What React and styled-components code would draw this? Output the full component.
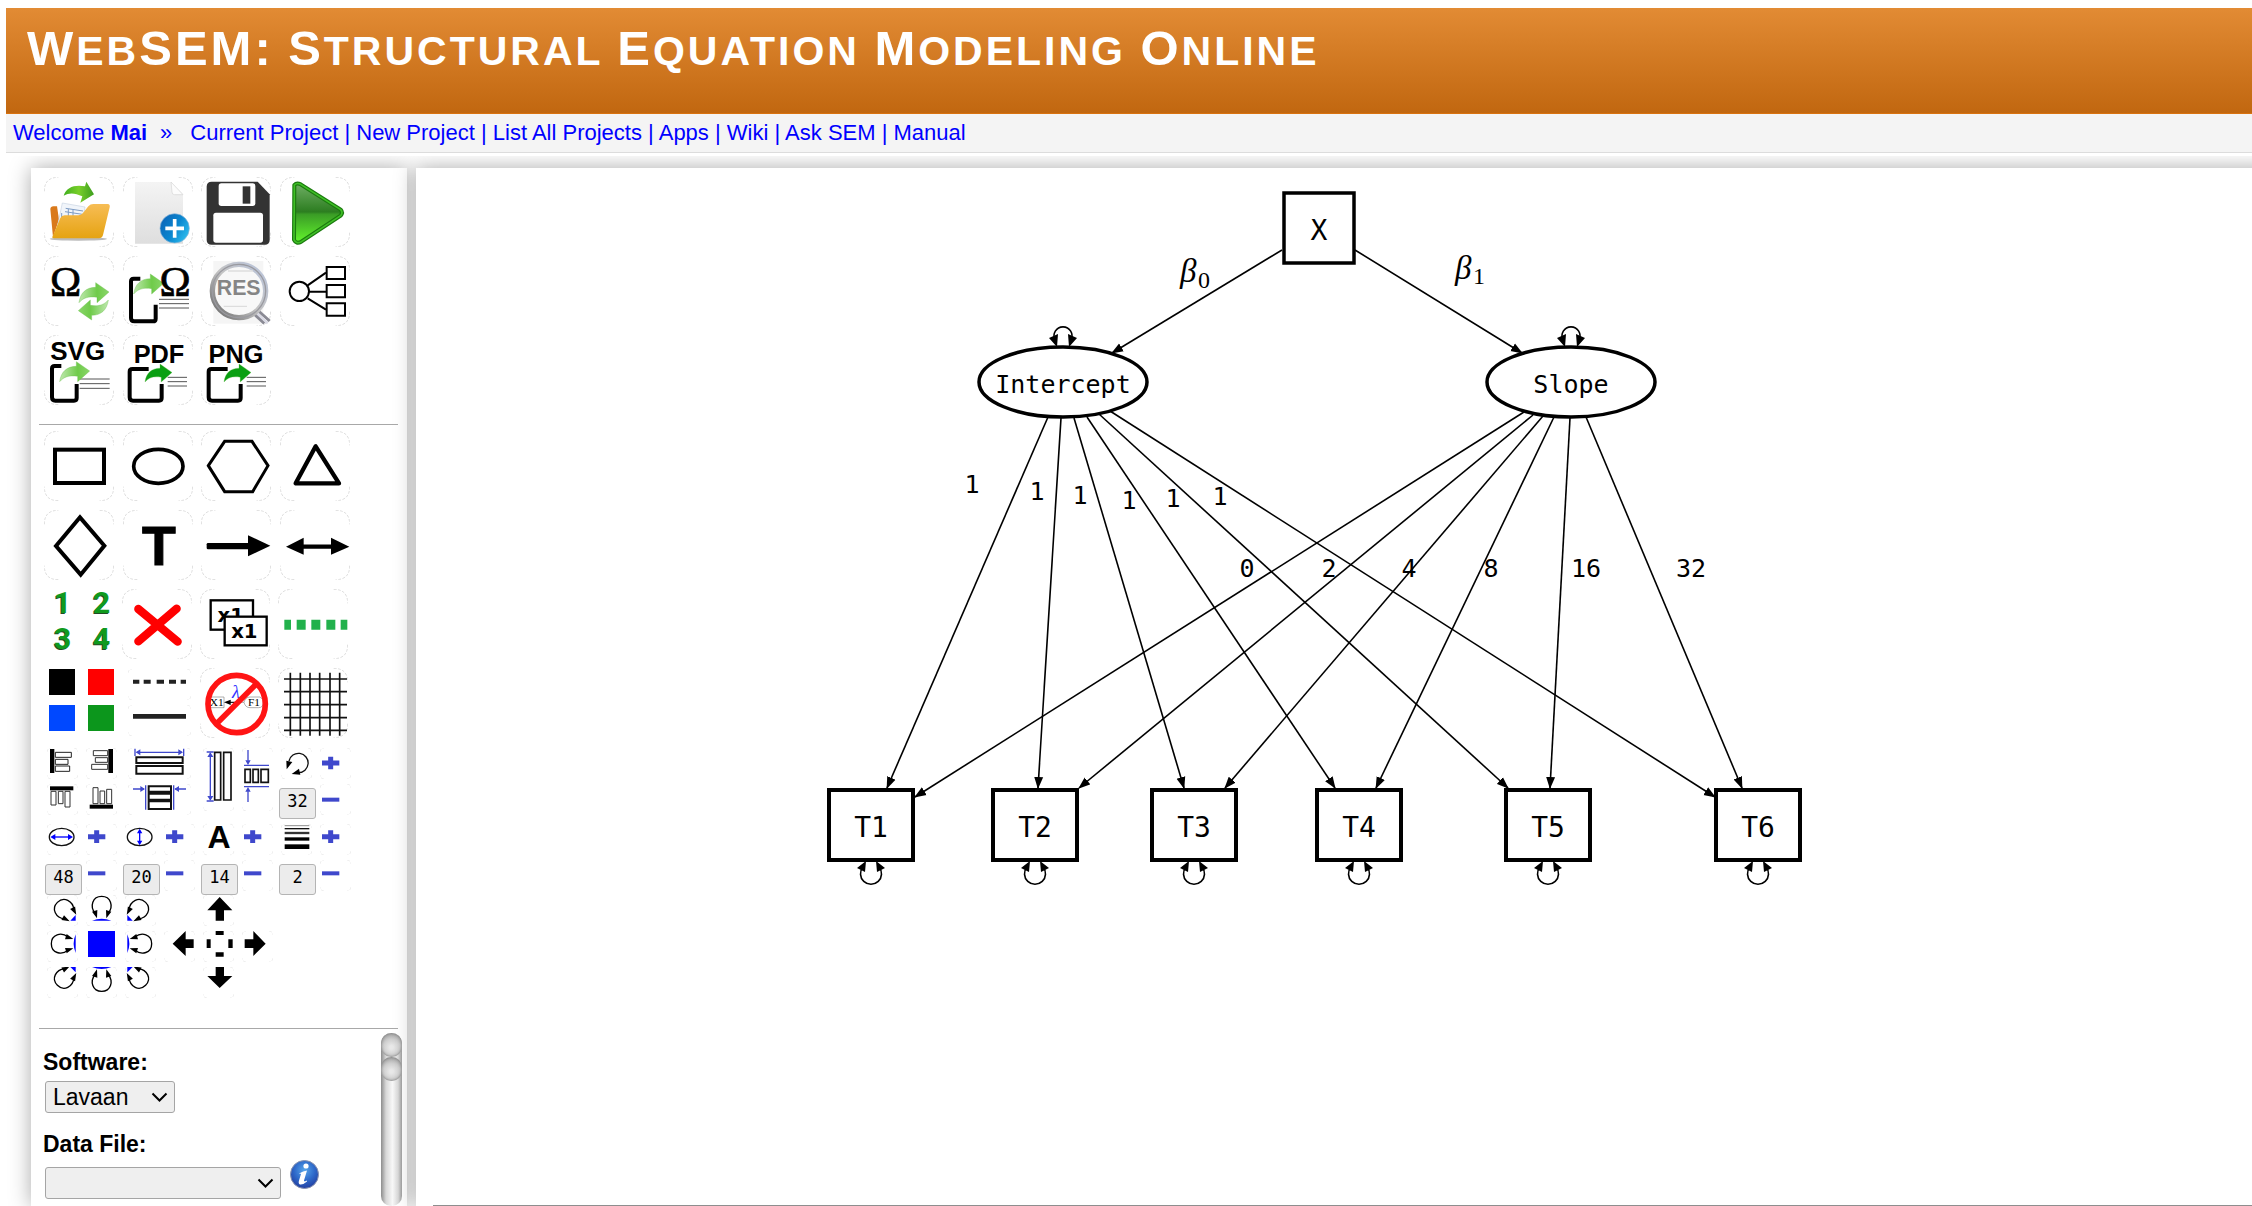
import React from "react";
import styled, { createGlobalStyle, css } from "styled-components";

const GlobalStyle = createGlobalStyle`
  *, *::before, *::after { box-sizing: border-box; }
  html, body, #root { height: 100%; }
  body {
    margin: 0;
    background: #fff;
    color: #000;
    font-family: "Liberation Sans", Arial, sans-serif;
    overflow: hidden;
  }
`;

/* ---------- page frame ---------- */

const Page = styled.div`
  display: flex;
  flex-direction: column;
  height: 100vh;
  padding: 8px 0 0 6px;
`;

const Header = styled.header`
  flex: none;
  height: 106px;
  padding: 12px 21px;
  background: linear-gradient(#e28b34, #c16710);
  border-bottom: 1px solid #d9720f;
`;

const Title = styled.h1`
  margin: 0;
  color: #fff;
  font-size: 41px;
  line-height: 56px;
  letter-spacing: 3px;
  text-transform: uppercase;
  white-space: nowrap;
`;

const Cap = styled.span`
  font-size: 49px;
`;

const Nav = styled.nav`
  flex: none;
  height: 39px;
  padding: 0 7px;
  background: #f4f4f4;
  border-bottom: 1px solid #dcdcdc;
  color: #00f;
  font-size: 22px;
  line-height: 38px;
  white-space: nowrap;
`;

const NavLink = styled.a`
  color: inherit;
  text-decoration: none;
`;

const Chevron = styled.span`
  margin: 0 18px 0 13px;
`;

const Workspace = styled.main`
  flex: 1;
  min-height: 0;
  display: flex;
  gap: 9px;
  margin: 3px 0 0 -6px;
  padding: 12px 0 0 31px;
  overflow: hidden;
`;

const panel = css`
  background: #fff;
  box-shadow: 0 0 20px #aaa;
`;

const Sidebar = styled.aside`
  ${panel}
  flex: none;
  width: 376px;
  padding-top: 9px;
  display: flex;
  flex-direction: column;
`;

/* Runs past the window's right edge, so its shadow stays even along the top. */
const Canvas = styled.section`
  ${panel}
  flex: 1;
  min-width: 0;
  margin-right: -24px;
  display: flex;
  flex-direction: column;
`;

const CanvasEdge = styled.div`
  flex: none;
  height: 1px;
  margin-left: 17px;
  background: #8e8e8e;
`;

/* ---------- tool palette ---------- */

const LargeGrid = styled.div`
  display: grid;
  grid-template-columns: 79px 78px 79px 70px;
  grid-auto-rows: 79px;
  padding-left: 13px;
`;

const SmallGrid = styled.div`
  display: grid;
  grid-template-columns: repeat(8, 39px);
  grid-template-rows: 36px 43px 36px 43px 36px 40px 36px 35px 36px 36px 36px;
  padding-left: 13px;
`;

const Divider = styled.hr`
  width: 359px;
  margin: ${(p) => p.$top}px 0 ${(p) => p.$bottom}px 8px;
  border: 0;
  border-top: 1px solid #a8a8a8;
`;

const place = css`
  justify-self: start;
  ${(p) => p.$at && `grid-column: ${p.$at[0]} / span ${p.$at[2] || 1}; grid-row: ${p.$at[1]} / span ${p.$at[3] || 1};`}
`;

const ToolButton = styled.button`
  ${place}
  display: block;
  width: ${(p) => p.$w}px;
  height: ${(p) => p.$h}px;
  margin: ${(p) => (p.$w === 70 ? "0" : p.$w === 63 ? "1px 0 0 6px" : "1px 0 0 3px")};
  padding: 0;
  border: 0;
  background: none;
  cursor: pointer;
  svg { display: block; overflow: ${(p) => (p.$spill ? "visible" : "hidden")}; }
`;

const DigitButton = styled.button`
  ${place}
  width: 31px;
  height: 31px;
  margin-left: 3px;
  padding: 0 0 3px;
  border: 0;
  background: none;
  color: #109a1e;
  font: 700 30px/26px Roboto, sans-serif;
  text-shadow: -1px 1px 0 #234a25;
  cursor: pointer;
`;

const SwatchButton = styled.button`
  ${place}
  width: ${(p) => p.$w || 26}px;
  height: 26px;
  margin: 1px 0 0 5px;
  padding: 0;
  border: 0;
  background: ${(p) => p.$color};
  cursor: pointer;
`;

const ValueInput = styled.input`
  ${place}
  width: 37px;
  height: 31px;
  margin: 5px 0 0 1px;
  padding: 0 0 6px;
  border: 1px solid #b4b4b4;
  border-radius: 3px;
  background: #ececec;
  text-align: center;
  font: 17px/24px "DejaVu Sans Mono", monospace;
`;

/* ---------- settings form ---------- */

const Settings = styled.div`
  flex: 1;
  min-height: 0;
  display: flex;
  overflow: hidden;
  padding-right: 5px;
`;

const Fields = styled.form`
  flex: 1;
  display: flex;
  flex-direction: column;
  gap: 18px;
  padding: 20px 0 0 12px;
`;

const Field = styled.div`
  display: flex;
  flex-direction: column;
`;

const Label = styled.label`
  font-size: 23px;
  font-weight: 700;
  line-height: 26px;
`;

const ControlRow = styled.div`
  display: flex;
  align-items: flex-end;
  gap: 9px;
  height: ${(p) => p.$h}px;
  padding-left: 2px;
`;

const SelectBox = styled.div`
  position: relative;
  width: ${(p) => p.$w}px;
  height: 32px;
  svg { position: absolute; right: 7px; top: 11px; pointer-events: none; }
`;

const Select = styled.select`
  appearance: none;
  width: 100%;
  height: 100%;
  padding: 0 7px;
  border: 1px solid #a5a5a5;
  border-radius: 3px;
  background: #efefef;
  color: #000;
  font: 23px/28px "Liberation Sans", Arial, sans-serif;
`;

const InfoButton = styled.button`
  align-self: flex-start;
  width: 29px;
  height: 29px;
  margin-top: 3px;
  padding: 0;
  border: 0;
  background: none;
  svg { display: block; }
`;

const ScrollTrack = styled.div`
  flex: none;
  width: 21px;
  margin-top: 4px;
  border-radius: 10px;
  background: linear-gradient(90deg, #8d8d8d, #d8d8d8 24%, #f8f8f8 55%, #d8d8d8 82%, #9a9a9a);
`;

const ScrollKnob = styled.div`
  height: 24px;
  border-radius: 12px;
  background: radial-gradient(circle at 50% 60%, #e8e8e8 10%, #cfcfcf 45%, #8a8a8a 100%);
  box-shadow: inset 0 0 3px #777;
`;

/* ---------- icon drawing ---------- */

function Corners({ x, y, w, h, r, color }) {
  const a = x + 1, b = y + 1, c = x + w - 1, d = y + h - 1;
  return (
    <path
      fill="none" stroke={color} strokeWidth="3" strokeDasharray="8 5"
      d={`M${a} ${b + r}Q${a} ${b} ${a + r} ${b}M${c - r} ${b}Q${c} ${b} ${c} ${b + r}M${c} ${d - r}Q${c} ${d} ${c - r} ${d}M${a + r} ${d}Q${a} ${d} ${a} ${d - r}`}
    />
  );
}

/* The drawings use three units to the pixel; o is the drawing's own origin. */
function Tool({ label, o, at, w = 70, h = 70, spill, children }) {
  const small = w < 70;
  return (
    <ToolButton type="button" aria-label={label} $at={at} $w={w} $h={h} $spill={spill}>
      <svg width={w} height={h} viewBox={`${o[0]} ${o[1]} ${w * 3} ${h * 3}`} aria-hidden="true">
        <Corners x={o[0]} y={o[1]} w={w * 3} h={h * 3} r={small ? 10 : 42} color={small ? "#ececec" : "#dcdcdc"} />
        {children}
      </svg>
    </ToolButton>
  );
}

const Mini = (p) => <Tool w={31} h={31} {...p} />;

const sans = "'Liberation Sans', Arial, sans-serif";
const serif = "'Liberation Serif', 'Times New Roman', serif";
const mono = "'DejaVu Sans Mono', monospace";

const Swoosh = ({ x, y, fill = "url(#leaf)", k = 1 }) => (
  <path transform={`translate(${x} ${y}) scale(${k})`} fill={fill} stroke="#5fb83f" strokeWidth="1"
    d="M0 60C4 30 22 14 50 14V0L90 28 54 60V44C28 40 12 46 0 60Z" />
);

const Export = ({ x, y, w = 86, h = 112 }) => (
  <path d={`M${x + 28} ${y}H${x + 8}Q${x} ${y} ${x} ${y + 8}V${y + h - 10}Q${x} ${y + h} ${x + 10} ${y + h}H${x + w - 14}Q${x + w - 6} ${y + h} ${x + w - 6} ${y + h - 8}V${y + h - 50}`}
    fill="none" stroke="#000" strokeWidth="12" />
);

const Lines = ({ x, y, w, gap = 14 }) => (
  <path d={`M${x} ${y}h${w}M${x} ${y + gap}h${w}M${x} ${y + 2 * gap}h${w}`} stroke="#555" strokeWidth="3" />
);

const Plus = ({ x, y }) => <path d={`M${x} ${y}h52M${x + 26} ${y - 19}v38`} stroke="#3f48cc" strokeWidth="15" fill="none" />;
const Minus = ({ x, y }) => <path d={`M${x} ${y}h52`} stroke="#3f48cc" strokeWidth="12" />;

/* A self loop, open at the bottom, turned to the given angle about its centre. */
const Loop = ({ x, y, turn = 0 }) => (
  <g transform={`translate(${x} ${y}) rotate(${turn})`}>
    <path d="M-20 22C-36 2-28-28 0-28S36 2 20 22" fill="none" stroke="#000" strokeWidth="4" />
    <path d="M-14 38L-29 18-13 13ZM14 38L29 18 13 13Z" />
  </g>
);

function Defs() {
  return (
    <svg width="0" height="0" style={{ position: "absolute" }} aria-hidden="true">
      <defs>
        <linearGradient id="leaf" x1="0" x2="1"><stop offset="0" stopColor="#bfe8ae" /><stop offset=".6" stopColor="#6fcb4a" /><stop offset="1" stopColor="#8ad66a" /></linearGradient>
        <linearGradient id="grass" x1="0" x2="1"><stop offset="0" stopColor="#3fae1e" /><stop offset=".5" stopColor="#79cf2a" /><stop offset="1" stopColor="#3c9d1e" /></linearGradient>
        <linearGradient id="folder" x1="0" x2="0" y1="0" y2="1"><stop offset="0" stopColor="#f7bd55" /><stop offset="1" stopColor="#e5a312" /></linearGradient>
        <linearGradient id="sheet" x1="0" x2="0" y1="0" y2="1"><stop offset="0" stopColor="#f4f4f4" /><stop offset="1" stopColor="#dedede" /></linearGradient>
        <linearGradient id="ball" x1="0" x2="1" y1="0" y2=".6"><stop offset="0" stopColor="#0d5fb4" /><stop offset=".6" stopColor="#0a86cf" /><stop offset="1" stopColor="#29b6ea" /></linearGradient>
        <linearGradient id="play" x1="0" x2="0" y1="0" y2="1"><stop offset="0" stopColor="#6fae64" /><stop offset=".48" stopColor="#2c7d20" /><stop offset=".52" stopColor="#3a9c26" /><stop offset="1" stopColor="#63f52c" /></linearGradient>
        <linearGradient id="rim" x1="0" x2="1" y1="1" y2="0"><stop offset="0" stopColor="#666" /><stop offset=".5" stopColor="#c4c4c4" /><stop offset="1" stopColor="#b9c4dc" /></linearGradient>
        <radialGradient id="info" cx=".5" cy=".35" r=".7"><stop offset="0" stopColor="#58a6ea" /><stop offset=".5" stopColor="#2f6bcb" /><stop offset="1" stopColor="#20379a" /></radialGradient>
      </defs>
    </svg>
  );
}

function FileTools() {
  return (
    <LargeGrid>
      <Tool label="Open" o={[73, 82]}>
        <ellipse cx="176" cy="268" rx="86" ry="5" fill="#bbb" />
        <path d="M92 178Q93 170 101 170H112L118 210 100 262Z" fill="#d9791b" />
        <path d="M128 160L196 172 186 230 112 236Z" fill="#f1f5fa" stroke="#c7d3e2" strokeWidth="2" />
        <path d="M138 176L190 184M136 186L188 194M126 190V210M146 178V205M160 180V205" stroke="#7e9cc4" strokeWidth="3" />
        <path d="M98 262L122 205Q126 197 135 197H176Q184 197 190 190L206 170Q212 163 221 163H264Q272 164 270 173L250 256Q247 266 238 266H102Q97 266 98 262Z" fill="url(#folder)" />
        <path d="M132 138C140 112 166 104 196 110L200 96 223 134 182 159 188 140C166 130 150 128 132 138Z" fill="url(#grass)" />
      </Tool>
      <Tool label="New" o={[310, 82]}>
        <path d="M346 97H454L490 133V282H346Z" fill="url(#sheet)" />
        <path d="M454 97L490 135H464Q457 135 457 127Z" fill="#fcfcfc" stroke="#d5d5d5" strokeWidth="2" />
        <circle cx="465" cy="236" r="44" fill="url(#ball)" stroke="#8cb7d8" strokeWidth="2" />
        <path d="M437 236H493M465 208V264" stroke="#fff" strokeWidth="11" />
      </Tool>
      <Tool label="Save" o={[544, 82]}>
        <path d="M576 96H714L750 134V270Q750 285 735 285H576Q561 285 561 270V111Q561 96 576 96Z" fill="#333" />
        <rect x="597" y="101" width="110" height="68" rx="8" fill="#fff" />
        <rect x="669" y="110" width="23" height="52" fill="#333" />
        <rect x="581" y="189" width="149" height="90" rx="8" fill="#fff" />
      </Tool>
      <Tool label="Run" o={[780, 82]}>
        <path d="M823 106Q830 98 842 104L962 180Q970 189 962 198L844 276Q828 284 822 270Z" fill="url(#play)" stroke="#1b7a0e" strokeWidth="12" strokeLinejoin="round" />
        <path d="M823 106Q830 98 842 104L962 180Q970 189 962 198L844 276Q828 284 822 270Z" fill="none" stroke="#3fbf26" strokeWidth="5" strokeLinejoin="round" />
      </Tool>

      <Tool label="Update parameters" o={[73, 319]}>
        <text x="138" y="438" textAnchor="middle" fontFamily={serif} fontSize="126" stroke="#000" strokeWidth="2">Ω</text>
        <Swoosh x={178} y={399} />
        <g transform="rotate(180 222 455)"><Swoosh x={178} y={399} /></g>
      </Tool>
      <Tool label="Export parameters" o={[310, 319]}>
        <Export x={334} y={387} w={80} h={128} />
        <Lines x={418} y={449} w={90} gap={13} />
        <Swoosh x={342} y={373} />
        <text x="466" y="438" textAnchor="middle" fontFamily={serif} fontSize="126" stroke="#000" strokeWidth="2">Ω</text>
      </Tool>
      <Tool label="Results" o={[544, 319]}>
        <rect x="581" y="334" width="150" height="188" fill="#f5f5f5" />
        <path d="M698 488L734 521M710 478L750 514" stroke="#8a8a94" strokeWidth="9" />
        <path d="M704 483L744 521" stroke="#d9d9e4" strokeWidth="7" />
        <circle cx="658" cy="424" r="80" fill="#f8f8f8" stroke="url(#rim)" strokeWidth="16" />
        <circle cx="658" cy="424" r="80" fill="none" stroke="#9a9aa0" strokeWidth="4" />
        <path d="M625 364H700M612 470H682" stroke="#ddd" strokeWidth="4" />
        <text x="657" y="437" textAnchor="middle" fontFamily={sans} fontWeight="700" fontSize="64" fill="#858585">RES</text>
      </Tool>
      <Tool label="Path diagram" o={[780, 319]}>
        <g fill="none" stroke="#000" strokeWidth="6">
          <circle cx="838" cy="425" r="29" />
          <path d="M863 407L918 369M868 426H918M863 446L918 480" />
          <path d="M920 352H975V388H920ZM920 406H975V443H920ZM920 461H975V498H920Z" />
        </g>
      </Tool>

      <Tool label="Export SVG" o={[73, 556]}>
        <text x="174" y="631" textAnchor="middle" fontFamily={sans} fontWeight="700" fontSize="78">SVG</text>
        <Export x={97} y={649} w={80} h={104} />
        <Lines x={180} y={688} w={90} />
        <Swoosh x={120} y={636} />
      </Tool>
      <Tool label="Export PDF" o={[310, 556]}>
        <text x="418" y="640" textAnchor="middle" fontFamily={sans} fontWeight="700" fontSize="76">PDF</text>
        <Export x={330} y={658} w={102} h={95} />
        <path d="M350 658H387" stroke="#000" strokeWidth="12" />
        <Lines x={444} y={683} w={58} gap={13} />
        <Swoosh x={376} y={643} k={0.9} fill="#0a9f12" />
      </Tool>
      <Tool label="Export PNG" o={[544, 556]}>
        <text x="649" y="640" textAnchor="middle" fontFamily={sans} fontWeight="700" fontSize="76">PNG</text>
        <Export x={567} y={658} w={102} h={95} />
        <path d="M587 658H624" stroke="#000" strokeWidth="12" />
        <Lines x={681} y={683} w={58} gap={13} />
        <Swoosh x={613} y={643} k={0.9} fill="#0a9f12" />
      </Tool>
    </LargeGrid>
  );
}

function ShapeTools() {
  return (
    <LargeGrid>
      <Tool label="Rectangle" o={[73, 34]}><rect x="106" y="90" width="147" height="100" fill="none" stroke="#000" strokeWidth="12" /></Tool>
      <Tool label="Ellipse" o={[310, 34]}><ellipse cx="416" cy="140" rx="74" ry="51" fill="none" stroke="#000" strokeWidth="11" /></Tool>
      <Tool label="Hexagon" o={[544, 34]}><path d="M566 138L615 65H697L745 138 699 216H615Z" fill="none" stroke="#000" strokeWidth="9" /></Tool>
      <Tool label="Triangle" o={[780, 34]}><path d="M887 80L827 191H957Z" fill="none" stroke="#000" strokeWidth="13" strokeLinejoin="round" /></Tool>
      <Tool label="Diamond" o={[73, 271]}><path d="M181 293L109 379 183 465 254 378Z" fill="none" stroke="#000" strokeWidth="12" /></Tool>
      <Tool label="Text" o={[310, 271]}><text x="418" y="437" textAnchor="middle" fontFamily={sans} fontWeight="700" fontSize="166" stroke="#000" strokeWidth="3">T</text></Tool>
      <Tool label="Path" o={[544, 271]}><rect x="561" y="370" width="130" height="19" rx="4" /><path d="M685 347L752 378 685 410Z" /></Tool>
      <Tool label="Covariance" o={[780, 271]}><path d="M840 381H940" stroke="#000" strokeWidth="13" /><path d="M798 381L851 354V405ZM988 381L933 354V405Z" /></Tool>
    </LargeGrid>
  );
}

function EditTools() {
  const steps = [
    { row: 7, col: 1, name: "Width", value: "48" },
    { row: 7, col: 3, name: "Height", value: "20" },
    { row: 7, col: 5, name: "Font size", value: "14" },
    { row: 7, col: 7, name: "Line width", value: "2" },
    { row: 5, col: 7, name: "Loop angle", value: "32" },
  ];
  return (
    <SmallGrid>
      <DigitButton type="button" $at={[1, 1]}>1</DigitButton>
      <DigitButton type="button" $at={[2, 1]}>2</DigitButton>
      <DigitButton type="button" $at={[1, 2]}>3</DigitButton>
      <DigitButton type="button" $at={[2, 2]}>4</DigitButton>
      <Tool label="Delete" o={[307, 508]} at={[3, 1, 2, 2]}>
        <path d="M356 568L474 666M471 567L356 665" stroke="#f00" strokeWidth="25" strokeLinecap="round" />
      </Tool>
      <Tool label="Duplicate" o={[541, 508]} at={[5, 1, 2, 2]}>
        <rect x="573" y="542" width="127" height="88" stroke="#000" strokeWidth="7" fill="#fff" />
        <text x="633" y="606" textAnchor="middle" fontFamily="'DejaVu Sans', sans-serif" fontWeight="700" fontSize="59">x1</text>
        <rect x="615" y="591" width="126" height="86" stroke="#000" strokeWidth="7" fill="#fff" />
        <text x="674" y="655" textAnchor="middle" fontFamily="'DejaVu Sans', sans-serif" fontWeight="700" fontSize="59">x1</text>
      </Tool>
      <Tool label="Dotted line" o={[776, 508]} at={[7, 1, 2, 2]}>
        <path d="M795 600h20v30h-20zM832 600h27v30h-27zM876 600h27v30h-27zM921 600h27v30h-27zM964 600h20v30h-20z" fill="#22b14c" />
      </Tool>

      <SwatchButton type="button" aria-label="Black" $at={[1, 3]} $color="#000" />
      <SwatchButton type="button" aria-label="Red" $at={[2, 3]} $color="#f00" />
      <SwatchButton type="button" aria-label="Blue" $at={[1, 4]} $color="#0048ff" />
      <SwatchButton type="button" aria-label="Green" $at={[2, 4]} $color="#0c961c" />
      <Mini label="Dashed" o={[324, 745]} w={63} at={[3, 3, 2]}><path d="M339 783H498" stroke="#222" strokeWidth="12" strokeDasharray="19 13 21 18 22 15 21 14" /></Mini>
      <Mini label="Solid" o={[324, 856]} w={63} at={[3, 4, 2]}><path d="M339 890H498" stroke="#222" strokeWidth="14" /></Mini>
      <Tool label="Hide parameters" o={[540, 745]} at={[5, 3, 2, 2]}>
        <path d="M572 832H612V864H572M672 848Q676 832 690 832H720Q734 840 730 850 728 864 716 864H690Q676 864 672 848ZM630 848H672" fill="none" stroke="#888" strokeWidth="2" />
        <path d="M612 848L632 840V856Z" /><path d="M626 848H650" stroke="#000" strokeWidth="3" />
        <text x="590" y="860" textAnchor="middle" fontFamily={serif} fontSize="34">X1</text>
        <text x="702" y="860" textAnchor="middle" fontFamily={serif} fontSize="34">F1</text>
        <text x="648" y="836" textAnchor="middle" fontFamily={serif} fontStyle="italic" fontSize="54" fill="#33f">λ</text>
        <path d="M588 914L712 790" stroke="#ff1414" strokeWidth="17" />
        <circle cx="650" cy="853" r="86" fill="none" stroke="#ff1414" strokeWidth="17" />
      </Tool>
      <Tool label="Grid" o={[774, 745]} at={[7, 3, 2, 2]}>
        <path d="M811 759V948M841 759V948M870 759V948M899 759V948M930 759V948M959 759V948M792 778H981M792 816H981M792 855H981M792 894H981M792 932H981" stroke="#111" strokeWidth="5" />
      </Tool>

      <Mini label="Align left" o={[82, 54]} at={[1, 5]}><path d="M91 57h13v72h-13z" /><path d="M107 67H155V82H107ZM107 88H145V103H107ZM107 108H150V124H107Z" fill="#fff" stroke="#222" strokeWidth="3" /></Mini>
      <Mini label="Align right" o={[197, 54]} at={[2, 5]}><path d="M264 57h14v72h-14z" /><path d="M219 62H262V77H219ZM225 83H262V97H225ZM214 103H262V118H214Z" fill="#fff" stroke="#333" strokeWidth="3" /></Mini>
      <Mini label="Align top" o={[82, 161]} at={[1, 6]}><path d="M91 168h70v12h-70z" /><path d="M94 183H109V224H94ZM116 183H130V220H116ZM136 183H151V230H136Z" fill="#fff" stroke="#333" strokeWidth="3" /></Mini>
      <Mini label="Align bottom" o={[197, 161]} at={[2, 6]}><path d="M208 223h70v12h-70z" /><path d="M218 172H233V220H218ZM239 182H253V220H239ZM259 177H274V220H259Z" fill="#fff" stroke="#333" strokeWidth="3" /></Mini>
      <Mini label="Same width" o={[324, 52]} w={63} at={[3, 5, 2]}>
        <path d="M345 54V76M491 54V76M350 65H486" stroke="#3f48cc" strokeWidth="4" /><path d="M347 65l14-9v18zM489 65l-14-9v18z" fill="#3f48cc" />
        <path d="M349 80H488V97H349ZM349 106H488V129H349Z" fill="#fff" stroke="#111" strokeWidth="6" />
      </Mini>
      <Mini label="Distribute vertically" o={[324, 161]} w={63} at={[3, 6, 2]}>
        <path d="M377 165V238M461 165V238M339 176H372M465 176H498" stroke="#3f48cc" strokeWidth="4" /><path d="M375 176l-14-9v18zM463 176l14-9v18z" fill="#3f48cc" />
        <path d="M386 168H453V184H386ZM386 190H453V208H386ZM386 213H453V236H386Z" fill="#fff" stroke="#111" strokeWidth="6" />
      </Mini>
      <Mini label="Same height" o={[548, 54]} h={63} at={[5, 5, 1, 2]}>
        <path d="M559 66H580M559 213H580M570 70V208" stroke="#3f48cc" strokeWidth="4" /><path d="M570 67l-9 14h18zM570 212l-9-14h18z" fill="#3f48cc" />
        <path d="M583 67H601V210H583ZM610 67H632V210H610Z" fill="#fff" stroke="#111" strokeWidth="5" />
      </Mini>
      <Mini label="Distribute horizontally" o={[664, 54]} h={63} at={[6, 5, 1, 2]}>
        <path d="M670 106H745M670 170H745M682 60V92M682 184V216" stroke="#3f48cc" strokeWidth="4" /><path d="M682 105l-8-14h16zM682 171l-8 14h16z" fill="#3f48cc" />
        <path d="M673 118H689V157H673ZM697 118H713V157H697ZM721 118H743V157H721Z" fill="#fff" stroke="#111" strokeWidth="5" />
      </Mini>
      <Mini label="Rotate loop" o={[780, 54]} at={[7, 5]}>
        <path d="M804 93A29 29 0 1 1 832 128" fill="none" stroke="#111" strokeWidth="4" /><path d="M797 118L796 92 814 96ZM812 132L834 116 838 134Z" />
      </Mini>
      <Mini label="Width" o={[82, 282]} at={[1, 7]}>
        <ellipse cx="126" cy="321" rx="37" ry="26" fill="none" stroke="#111" strokeWidth="4" /><path d="M100 321H152" stroke="#00f" strokeWidth="4" /><path d="M92 321l15-9v18zM160 321l-15-9v18z" fill="#00f" />
      </Mini>
      <Mini label="Height" o={[316, 282]} at={[3, 7]}>
        <ellipse cx="360" cy="321" rx="37" ry="26" fill="none" stroke="#111" strokeWidth="4" /><path d="M360 302V340" stroke="#00f" strokeWidth="4" /><path d="M360 296l-8 14h16zM360 346l-8-14h16z" fill="#00f" />
      </Mini>
      <Mini label="Font size" o={[547, 282]} at={[5, 7]} spill><text x="595" y="355" textAnchor="middle" fontFamily={sans} fontWeight="700" fontSize="96">A</text></Mini>
      <Mini label="Line width" o={[780, 282]} at={[7, 7]}>
        <path d="M791 287H865" stroke="#555" strokeWidth="2" /><path d="M791 296H865" stroke="#111" strokeWidth="4" /><path d="M791 309H865" stroke="#333" strokeWidth="7" /><path d="M791 327H865" stroke="#000" strokeWidth="10" /><path d="M791 350H865" stroke="#000" strokeWidth="14" />
      </Mini>
      {steps.map((s) => (
        <React.Fragment key={s.name}>
          <Mini label={`Increase ${s.name.toLowerCase()}`} o={[197, 282]} at={[s.col + 1, s.row]}><Plus x={203} y={s.row === 5 ? 327 : 320} /></Mini>
          <Mini label={`Decrease ${s.name.toLowerCase()}`} o={[197, 391]} at={[s.col + 1, s.row + 1]}><Minus x={203} y={s.row === 5 ? 438 : 431} /></Mini>
          <ValueInput aria-label={s.name} defaultValue={s.value} $at={[s.col, s.row + 1]} />
        </React.Fragment>
      ))}

      <Mini label="Loop top left" o={[82, 496]} at={[1, 9]}><path d="M152 573L168 556V573Z" fill="#00f" /><Loop x={133} y={538} turn={-45} /></Mini>
      <Mini label="Loop top" o={[197, 496]} at={[2, 9]}><Loop x={244} y={528} /><path d="M215 573Q244 561 273 573Z" fill="#00f" /></Mini>
      <Mini label="Loop top right" o={[314, 496]} at={[3, 9]}><path d="M337 573L321 556V573Z" fill="#00f" /><Loop x={356} y={538} turn={45} /></Mini>
      <Mini label="Loop left" o={[82, 604]} at={[1, 10]}><Loop x={123} y={642} turn={-90} /><path d="M168 614Q156 642 168 670Z" fill="#00f" /></Mini>
      <SwatchButton type="button" aria-label="Node" $w={27} $at={[2, 10]} $color="#00f" />
      <Mini label="Loop right" o={[314, 604]} at={[3, 10]}><Loop x={366} y={642} turn={90} /><path d="M321 614Q333 642 321 670Z" fill="#00f" /></Mini>
      <Mini label="Loop bottom left" o={[82, 711]} at={[1, 11]}><path d="M152 711L168 727V711Z" fill="#00f" /><Loop x={133} y={746} turn={-135} /></Mini>
      <Mini label="Loop bottom" o={[197, 711]} at={[2, 11]}><path d="M215 711Q244 723 273 711Z" fill="#00f" /><Loop x={244} y={756} turn={180} /></Mini>
      <Mini label="Loop bottom right" o={[314, 711]} at={[3, 11]}><path d="M337 711L321 727V711Z" fill="#00f" /><Loop x={356} y={746} turn={135} /></Mini>

      <Mini label="Move up" o={[547, 496]} at={[5, 9]}><path d="M597 502L635 542H610V573H585V542H560Z" /></Mini>
      <Mini label="Move left" o={[430, 604]} at={[4, 10]}><path d="M456 642L495 604V629H519V655H495V679Z" /></Mini>
      <Mini label="Centre" o={[547, 604]} at={[5, 10]}><path d="M585 604h24v12h-24zM585 668h24v13h-24zM558 629h12v26h-12zM623 629h13v26h-13z" /></Mini>
      <Mini label="Move right" o={[664, 604]} at={[6, 10]}><path d="M735 642L698 604V629H672V655H698V679Z" /></Mini>
      <Mini label="Move down" o={[547, 711]} at={[5, 11]}><path d="M597 774L635 738H610V711H585V738H560Z" /></Mini>
    </SmallGrid>
  );
}

/* ---------- settings ---------- */

const Arrow = () => (
  <svg width="17" height="11" viewBox="0 0 17 11" aria-hidden="true"><path d="M1.500 1.500L8.500 8.500 15.500 1.500" fill="none" stroke="#000" strokeWidth="2" /></svg>
);

function SettingsForm() {
  return (
    <Settings>
      <Fields>
        <Field>
          <Label htmlFor="software">Software:</Label>
          <ControlRow $h={38}>
            <SelectBox $w={130}>
              <Select id="software" defaultValue="Lavaan"><option>Lavaan</option></Select>
              <Arrow />
            </SelectBox>
          </ControlRow>
        </Field>
        <Field>
          <Label htmlFor="datafile">Data File:</Label>
          <ControlRow $h={42}>
            <SelectBox $w={236}>
              <Select id="datafile" defaultValue=""><option value="" /></Select>
              <Arrow />
            </SelectBox>
            <InfoButton type="button" aria-label="Data file information">
              <svg width="29" height="29" viewBox="0 0 29 29" aria-hidden="true">
                <circle cx="14.500" cy="14.500" r="14" fill="url(#info)" stroke="#8a93ad" />
                <circle cx="16" cy="6" r="2.600" fill="#fff" />
                <path d="M9.500 13.200Q13 11 17 10.500L14 20.500Q13.700 22.200 16.800 20.500L17 21.500Q13 25 10 24.500 8 23.500 9 20.500L11 14Q10.500 13.200 9.500 14Z" fill="#fff" />
              </svg>
            </InfoButton>
          </ControlRow>
        </Field>
      </Fields>
      <ScrollTrack>
        <ScrollKnob />
        <ScrollKnob />
      </ScrollTrack>
    </Settings>
  );
}

/* ---------- path diagram ---------- */

const observed = [
  { name: "T1", x: 871 },
  { name: "T2", x: 1035 },
  { name: "T3", x: 1194 },
  { name: "T4", x: 1359 },
  { name: "T5", x: 1548 },
  { name: "T6", x: 1758 },
];

const latent = [
  { name: "Intercept", x: 1063 },
  { name: "Slope", x: 1571 },
];

const paths = [
  [1282, 250, 1112, 353], [1355, 250, 1522, 353],
  [1048, 417, 887, 788], [1061, 418, 1038, 788], [1074, 418, 1184, 788],
  [1087, 417, 1335, 788], [1099, 414, 1508, 788], [1110, 411, 1715, 797],
  [1524, 412, 915, 797], [1533, 415, 1079, 788], [1543, 416, 1225, 788],
  [1554, 417, 1376, 788], [1570, 418, 1550, 788], [1586, 417, 1742, 788],
];

const weights = [
  ["1", 972, 493], ["1", 1037, 500], ["1", 1080, 504], ["1", 1129, 509], ["1", 1173, 507], ["1", 1220, 505],
  ["0", 1247, 577], ["2", 1329, 577], ["4", 1409, 577], ["8", 1491, 577], ["16", 1586, 577], ["32", 1691, 577],
];

const DiagramArea = styled.svg`
  display: block;
  flex: 1;
  min-height: 0;
  width: 100%;
  text { text-anchor: middle; font-family: ${mono}; }
  .beta { font-family: ${serif}; font-style: italic; font-size: 33px; text-anchor: start; }
  .sub { font-family: ${serif}; font-size: 24px; text-anchor: start; }
`;

function Diagram() {
  return (
    <DiagramArea viewBox="416 168 1836 1037" preserveAspectRatio="xMinYMin meet" role="img" aria-label="Growth curve model">
      <defs>
        <marker id="head" markerUnits="userSpaceOnUse" markerWidth="12" markerHeight="10" refX="11" refY="5" orient="auto">
          <path d="M0 0.500L12 5 0 9.500Z" />
        </marker>
      </defs>
      <g stroke="#000" strokeWidth="1.600">
        {paths.map(([x1, y1, x2, y2]) => (
          <line key={`${x1}-${x2}`} x1={x1} y1={y1} x2={x2} y2={y2} markerEnd="url(#head)" />
        ))}
      </g>
      <rect x="1284" y="193" width="70" height="70" fill="#fff" stroke="#000" strokeWidth="3.500" />
      <text x="1319" y="240" fontSize="28">X</text>
      {latent.map(({ name, x }) => (
        <g key={name}>
          <path d={`M${x - 8} 340A9 9 0 1 1 ${x + 8} 340`} fill="none" stroke="#000" strokeWidth="1.600" />
          <path d={`M${x - 6} 347L${x - 14} 338 ${x - 5} 334ZM${x + 6} 347L${x + 14} 338 ${x + 5} 334Z`} />
          <ellipse cx={x} cy="382" rx="84" ry="35" fill="#fff" stroke="#000" strokeWidth="3.500" />
          <text x={x} y="393" fontSize="25">{name}</text>
        </g>
      ))}
      {observed.map(({ name, x }) => (
        <g key={name}>
          <rect x={x - 42} y="790" width="84" height="70" fill="#fff" stroke="#000" strokeWidth="4" />
          <text x={x} y="837" fontSize="28">{name}</text>
          <path d={`M${x - 8} 867A10.500 10.500 0 1 0 ${x + 8} 867`} fill="none" stroke="#000" strokeWidth="1.600" />
          <path d={`M${x - 5} 861L${x - 14} 868 ${x - 6} 872ZM${x + 5} 861L${x + 14} 868 ${x + 6} 872Z`} />
        </g>
      ))}
      {weights.map(([label, x, y]) => (
        <text key={x} x={x} y={y} fontSize="25">{label}</text>
      ))}
      <text className="beta" x="1180" y="282">β</text>
      <text className="sub" x="1198" y="288">0</text>
      <text className="beta" x="1455" y="279">β</text>
      <text className="sub" x="1473" y="284">1</text>
    </DiagramArea>
  );
}

/* ---------- app ---------- */

const titleWords = ["Web", "Structural", "Equation", "Modeling", "Online"];
const links = ["Current Project", "New Project", "List All Projects", "Apps", "Wiki", "Ask SEM", "Manual"];

export default function App() {
  return (
    <>
      <GlobalStyle />
      <Defs />
      <Page>
        <Header>
          <Title>
            {titleWords.map((word, i) => (
              <React.Fragment key={word}>
                <Cap>{word[0]}</Cap>
                {word.slice(1)}
                {i === 0 && <Cap>SEM:</Cap>}{" "}
              </React.Fragment>
            ))}
          </Title>
        </Header>
        <Nav>
          <NavLink href="#account">Welcome <b>Mai</b></NavLink>
          <Chevron>»</Chevron>
          {links.map((text, i) => (
            <React.Fragment key={text}>
              {i > 0 && " | "}
              <NavLink href={`#${text.toLowerCase().replace(/ /g, "-")}`}>{text}</NavLink>
            </React.Fragment>
          ))}
        </Nav>
        <Workspace>
          <Sidebar>
            <FileTools />
            <Divider $top={10} $bottom={6} />
            <ShapeTools />
            <EditTools />
            <Divider $top={26} $bottom={0} />
            <SettingsForm />
          </Sidebar>
          <Canvas>
            <Diagram />
            <CanvasEdge />
          </Canvas>
        </Workspace>
      </Page>
    </>
  );
}
